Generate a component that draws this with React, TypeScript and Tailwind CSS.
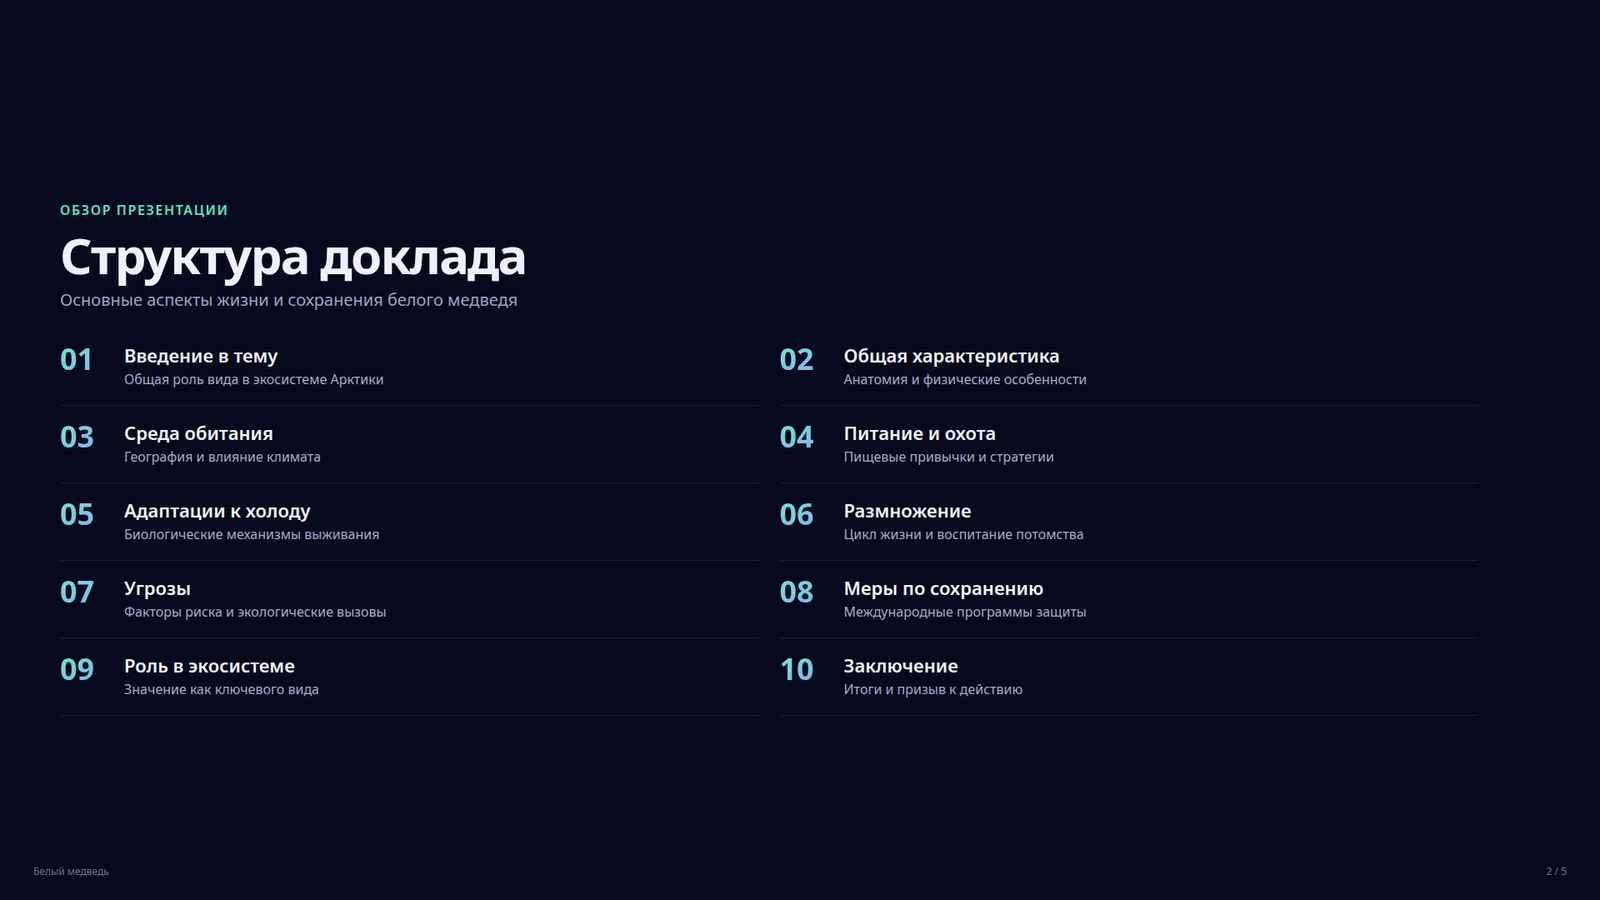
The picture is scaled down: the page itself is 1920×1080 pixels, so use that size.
const items = [
  ['01', 'Введение в тему', 'Общая роль вида в экосистеме Арктики'],
  ['02', 'Общая характеристика', 'Анатомия и физические особенности'],
  ['03', 'Среда обитания', 'География и влияние климата'],
  ['04', 'Питание и охота', 'Пищевые привычки и стратегии'],
  ['05', 'Адаптации к холоду', 'Биологические механизмы выживания'],
  ['06', 'Размножение', 'Цикл жизни и воспитание потомства'],
  ['07', 'Угрозы', 'Факторы риска и экологические вызовы'],
  ['08', 'Меры по сохранению', 'Международные программы защиты'],
  ['09', 'Роль в экосистеме', 'Значение как ключевого вида'],
  ['10', 'Заключение', 'Итоги и призыв к действию'],
];

export default function App() {
  return (
    <div className="w-[1920px] h-[1080px] bg-[#060a1c] flex flex-col font-['Inter',sans-serif] text-white overflow-hidden">
      <div className="flex-1 pl-[72px] pt-[240px] w-[1773px]">
        <p className="text-[16px] leading-6 font-semibold tracking-[0.1em] text-[#5ee5c0] mb-[9px]">ОБЗОР ПРЕЗЕНТАЦИИ</p>
        <h1 className="text-[60px] leading-[66px] font-bold tracking-[-0.03em] text-[#eef1fb]">Структура доклада</h1>
        <p className="mt-[7px] text-[20px] leading-7 text-[#9aa6c4]">Основные аспекты жизни и сохранения белого медведя</p>

        <div className="mt-[20px] grid grid-cols-2 gap-x-[26px]">
          {items.map(([n, t, d]) => (
            <div key={n} className="flex pt-[18px] pb-[20px] border-b border-[#1a2034]">
              <div className="w-[77px] shrink-0 text-[36px] leading-[38px] font-bold bg-gradient-to-br from-[#6ee7d0] to-[#8b8cf8] bg-clip-text text-transparent">{n}</div>
              <div className="flex flex-col gap-1">
                <p className="text-[22px] leading-7 font-semibold text-[#f1f4fb]">{t}</p>
                <p className="text-[16px] leading-[22px] text-[#a3adc8]">{d}</p>
              </div>
            </div>
          ))}
        </div>
      </div>
      <div className="flex justify-between px-[40px] pb-[26px] text-[12px] leading-4 text-[#6b7494]">
        <span>Белый медведь</span>
        <span>2 / 5</span>
      </div>
    </div>
  );
}
